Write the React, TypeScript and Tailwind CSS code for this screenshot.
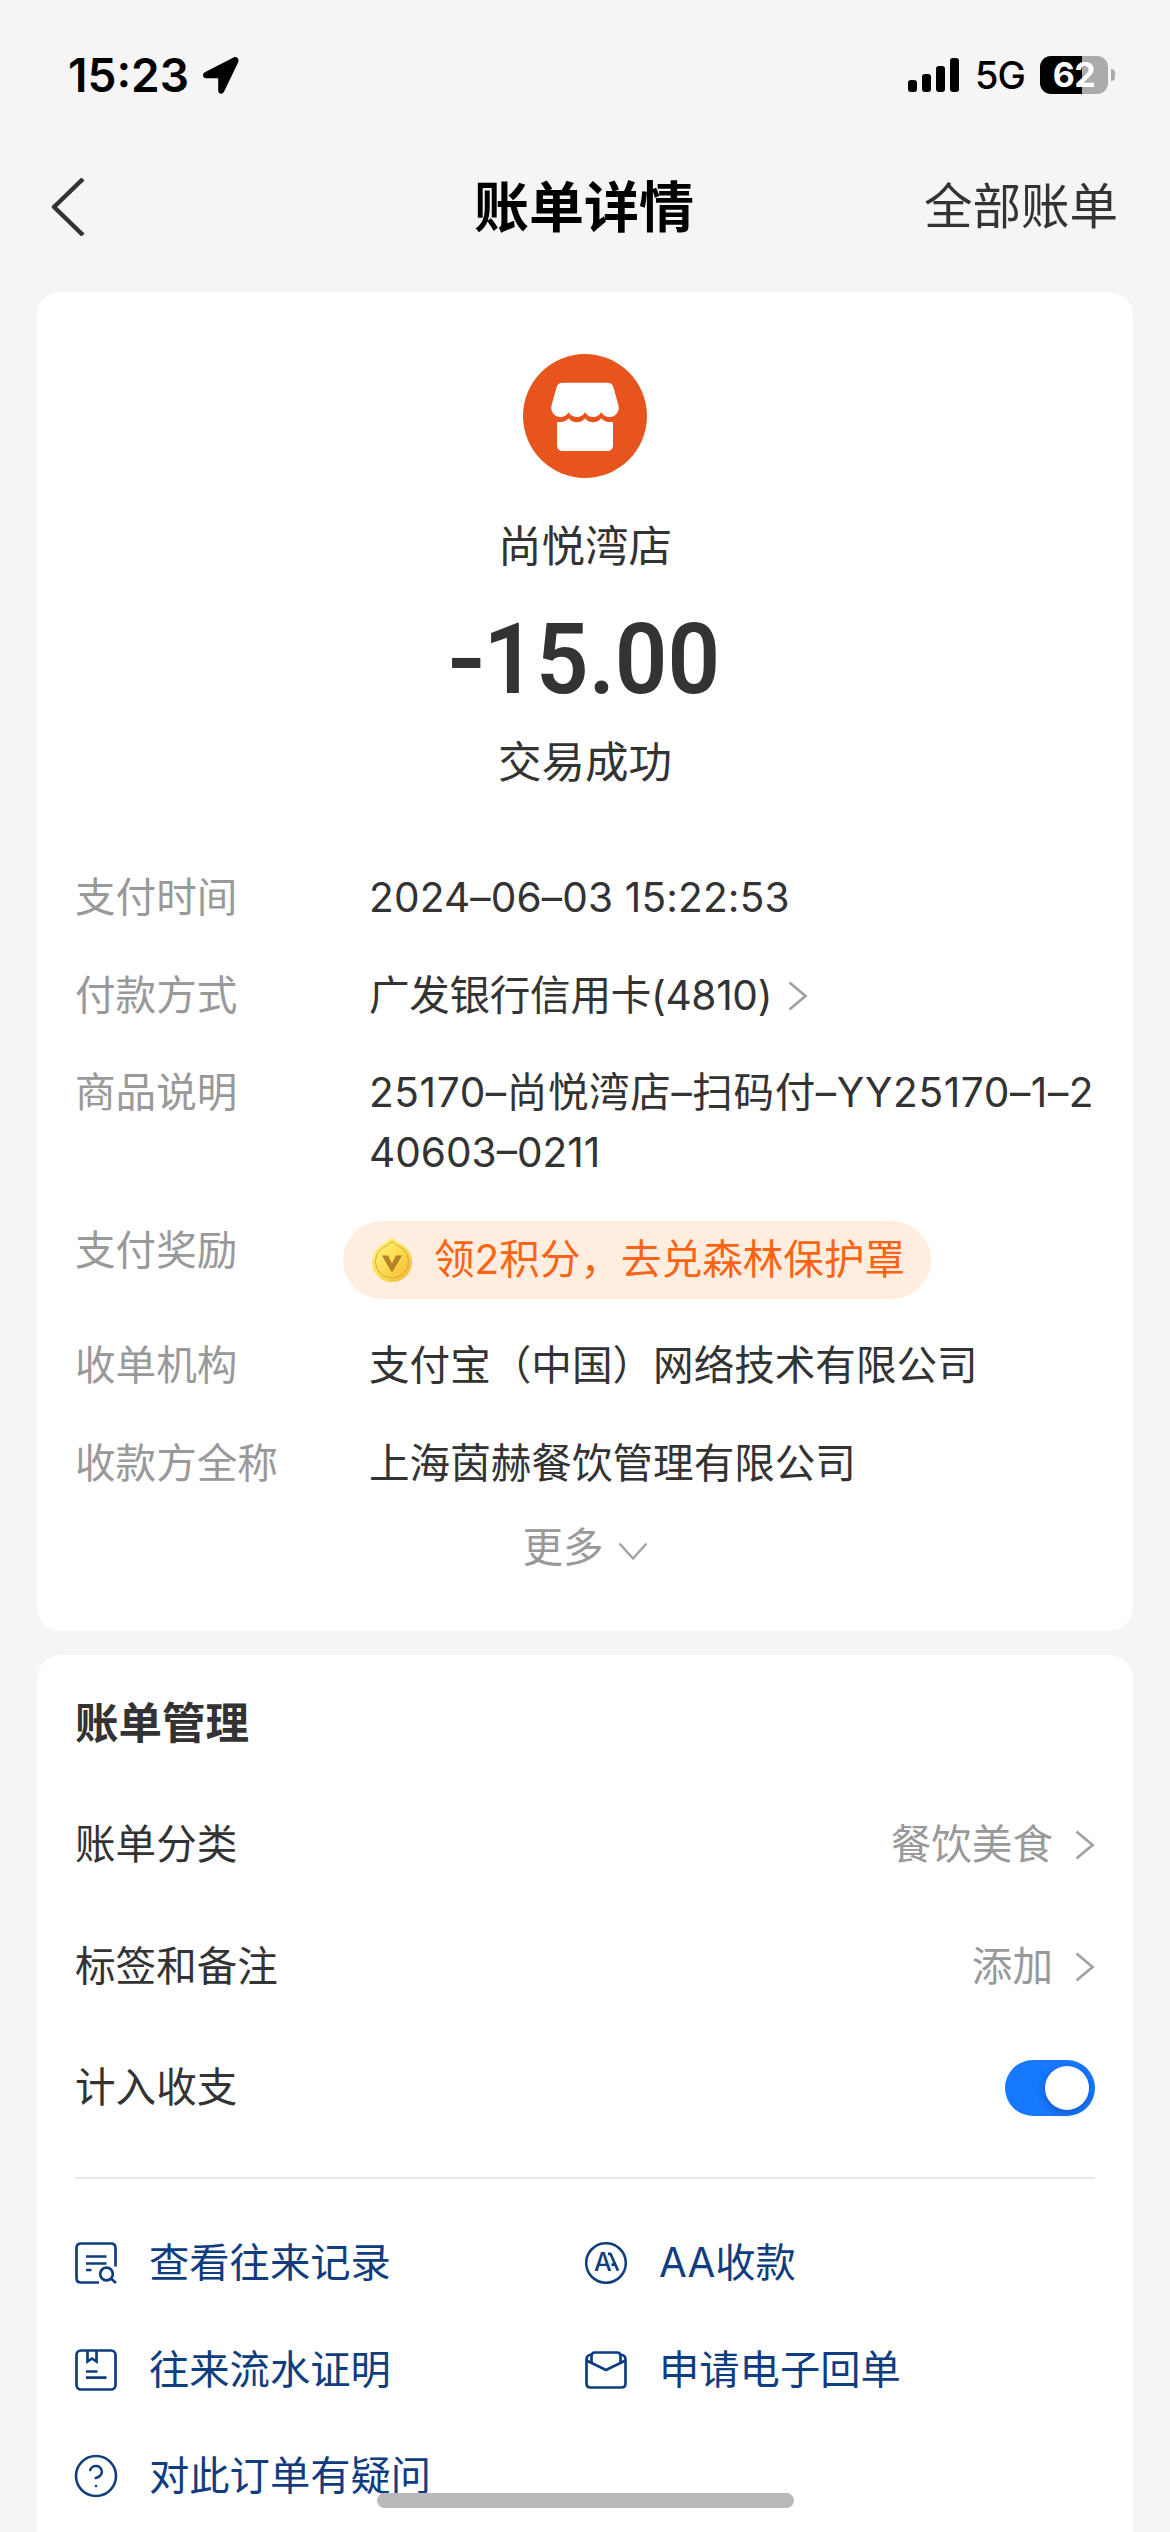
import { ReactNode, useState } from 'react';
import { CircleHelp } from 'lucide-react';

interface RowProps {
  label: string;
  children: ReactNode;
}

const StatusBar = () => (
  <div className="flex h-[150px] items-center justify-between pl-[68px] pr-[55px]">
    <div className="flex items-center gap-[13px]">
      <span className="text-[46px] leading-none font-semibold text-black">15:23</span>
      <svg className="h-[38px] w-[38px]" viewBox="0 0 38 38" fill="#000">
        <path d="M31.5 1.5 2.8 16.2C0 17.8.7 22.2 4 22.3H16.2V34.8C16.3 38 20.6 38.9 22 35.8L36.2 6.2C37.6 2.8 34.6 0 31.5 1.5Z" />
      </svg>
    </div>
    <div className="flex items-center">
      <svg className="h-[36px] w-[52px]" viewBox="0 0 52 36" fill="#000">
        <rect x="0" y="23" width="9" height="12" rx="3" />
        <rect x="14" y="17" width="9" height="18" rx="3" />
        <rect x="28" y="9" width="9" height="26" rx="3" />
        <rect x="42" y="1" width="9" height="34" rx="3" />
      </svg>
      <span className="ml-[15px] w-[51px] text-[38px] leading-none font-[450] tracking-[-1px] text-black">5G</span>
      <div className="ml-[14px] flex h-[38px] w-[68px] items-center justify-center rounded-[11px] bg-linear-to-r from-black from-62% to-[#ababab] to-62%">
        <span className="text-[34px] leading-none font-bold tracking-[-0.5px] text-white">62</span>
      </div>
      <span className="ml-[3px] h-3 w-[4px] rounded-r-full bg-[#ababab]" />
    </div>
  </div>
);

const NavBar = () => (
  <header className="grid h-28 grid-cols-3 items-center pt-0.5 pr-[52px] pl-[50px]">
    <svg className="h-[58px] w-[35px]" viewBox="0 0 35 58" fill="none" stroke="#333" strokeWidth="4.5">
      <path d="M33 1 4 29 33 57" strokeLinejoin="round" />
    </svg>
    <h1 className="text-center text-[55px] leading-none font-bold whitespace-nowrap text-black">账单详情</h1>
    <span className="text-right text-[48.5px] leading-none whitespace-nowrap">全部账单</span>
  </header>
);

const StoreIcon = () => (
  <svg className="h-[124px] w-[124px]" viewBox="0 0 124 124">
    <circle cx="62" cy="62" r="62" fill="#e8541e" />
    <path
      fill="#fff"
      d="M39.5 28.7H84.5Q89.5 28.7 90.5 33.5L95.6 52C96.6 58 92.5 63 86.5 63C83 63 80 61.5 78.3 58.3C76.5 61.5 73.5 63 70 63S63.7 61.5 62 58.3C60.3 61.5 57.5 63 54 63S47 61.5 45.5 58.3C44 61.5 41 63 37.5 63C31.5 63 27.4 58 28.4 52L33.5 33.5Q34.5 28.7 39.5 28.7Z"
    />
    <path
      fill="#fff"
      d="M34 68H38C41 68 43.5 66.8 45.5 64.3C47.5 66.8 50.5 68.3 54 68.3S60 66.8 62 64.3C64 66.8 66.5 68.3 70 68.3S76.3 66.8 78.3 64.3C80.5 66.8 83 68 86 68H90V91Q90 97 84 97H40Q34 97 34 91Z"
    />
  </svg>
);

const CoinIcon = () => (
  <svg className="h-[46px] w-[42px]" viewBox="0 0 42 46">
    <defs>
      <linearGradient id="coin" x1="0" y1="0" x2="1" y2="1">
        <stop offset="0.1" stopColor="#fff27a" />
        <stop offset="0.5" stopColor="#fbdc52" />
        <stop offset="1" stopColor="#f3b62f" />
      </linearGradient>
    </defs>
    <path d="M21 0.5C23 2 26 5 30.5 7.5A20 20 0 1 1 11.5 7.5C16 5 19 2 21 0.5Z" fill="url(#coin)" />
    <path
      d="M21 4.5C23 6.5 26 8.5 29 10A16.5 16.5 0 1 1 13 10C16 8.5 19 6.5 21 4.5Z"
      fill="none"
      stroke="#dfa63a"
      strokeWidth="1"
    />
    <path d="M11 18.5H17L21 26.5 25 18.5H31L21.8 34.5H20.2Z" fill="#b5822a" />
  </svg>
);

const Chevron = () => (
  <svg className="h-[30px] w-[20px] shrink-0" viewBox="0 0 20 30" fill="none" stroke="#a3a3a3" strokeWidth="2.8">
    <path d="M1.5 1.5 17.5 15 1.5 28.5" />
  </svg>
);

const RecordIcon = () => (
  <svg className="h-[42px] w-[42px]" viewBox="0 0 42 42" fill="none" stroke="#0f3d80" strokeWidth="2.7">
    <path d="M40.5 24.5V6Q40.5 1.5 36 1.5H6Q1.5 1.5 1.5 6V36Q1.5 40.5 6 40.5H24" />
    <path d="M11 14.5H31.5M11 21.5H31.5M11 28H16.5" />
    <circle cx="31.5" cy="32" r="6.3" />
    <path d="M36 36.5 41 41" />
  </svg>
);

const StatementIcon = () => (
  <svg className="h-[42px] w-[42px]" viewBox="0 0 42 42" fill="none" stroke="#0f3d80" strokeWidth="2.7">
    <rect x="1.5" y="1.5" width="39" height="39" rx="4.5" />
    <path d="M12.5 2V12.5L17 9.5 21.5 12.5V2M11 22.5H22.5M11 28.7H31.5" />
  </svg>
);

const SplitIcon = () => (
  <svg className="h-[42px] w-[42px]" viewBox="0 0 42 42" fill="#0f3d80">
    <circle cx="21" cy="21" r="19.8" fill="none" stroke="#0f3d80" strokeWidth="2.5" />
    <text x="9" y="28.8" fontSize="25" fontWeight="500">
      A
    </text>
    <path
      d="M23 11.8H25.5L33 28.8M26.5 22.7H30.5"
      fill="none"
      stroke="#0f3d80"
      strokeWidth="2.7"
      strokeLinejoin="round"
    />
  </svg>
);

const MailIcon = () => (
  <svg className="h-[42px] w-[42px]" viewBox="0 0 42 42" fill="none" stroke="#0f3d80" strokeWidth="2.7">
    <path d="M6.5 5.5Q1.5 6 1.5 10.5V34.5Q1.5 38.5 5.5 38.5H36.5Q40.5 38.5 40.5 34.5V10.5Q40.5 6 35.5 5.5" />
    <path d="M6.5 13.5V7Q6.5 3.5 10 3.5H32Q35.5 3.5 35.5 7V13.5" />
    <path d="M1.5 11.5 21 21 40.5 11.5" />
  </svg>
);

const DetailRow: React.FC<RowProps> = ({ label, children }) => (
  <div className="flex items-start">
    <dt className="w-[294px] shrink-0 text-[#999]">{label}</dt>
    <dd className="min-w-0 flex-1">{children}</dd>
  </div>
);

const SettingRow: React.FC<RowProps> = ({ label, children }) => (
  <div className="flex h-[121.5px] items-center justify-between">
    <span>{label}</span>
    {children}
  </div>
);

const LINKS = [
  { label: '查看往来记录', icon: <RecordIcon /> },
  { label: 'AA收款', icon: <SplitIcon /> },
  { label: '往来流水证明', icon: <StatementIcon /> },
  { label: '申请电子回单', icon: <MailIcon /> },
  { label: '对此订单有疑问', icon: <CircleHelp className="-m-[3px]" size={48} strokeWidth={1.3} /> },
];

const App = () => {
  const [included, setIncluded] = useState(true);

  return (
    <div className="relative h-[2532px] w-[1170px] overflow-hidden bg-[#f5f5f5] font-['Inter','Noto_Sans_CJK_SC',sans-serif] font-[370] text-[#333]">
      <StatusBar />
      <NavBar />

      <main className="flex flex-col gap-6 px-[37px] pt-[30px] text-[40.6px] leading-[60px]">
        <section className="rounded-3xl bg-white px-[38px] pt-[62px] pb-[53px]">
          <div className="flex flex-col items-center text-[43.5px]">
            <StoreIcon />
            <p className="mt-[38px]">尚悦湾店</p>
            <p className="mt-[36px] flex scale-x-[0.94] items-center font-['Roboto',sans-serif] text-[98px] leading-[96px] font-[650]">
              <span className="scale-x-[1.15]">-</span>
              <span>15.00</span>
            </p>
            <p className="mt-6">交易成功</p>
          </div>

          <dl className="mt-[76px] flex flex-col gap-[37.5px]">
            <DetailRow label="支付时间">
              <span className="tracking-[0.15px]">2024–06–03 15:22:53</span>
            </DetailRow>
            <DetailRow label="付款方式">
              <span className="flex items-center gap-4">
                <span className="tracking-[-0.3px]">广发银行信用卡(4810)</span>
                <Chevron />
              </span>
            </DetailRow>
            <DetailRow label="商品说明">
              <span className="block break-all">
                <span className="tracking-[0.6px]">25170–尚悦湾店–扫码付–YY25170–1–2</span>
                40603–0211
              </span>
            </DetailRow>
            <DetailRow label="支付奖励">
              <a className="-ml-[26px] flex h-[78px] w-fit items-center gap-[21px] rounded-full bg-[#ffeee0] pr-[26px] pl-7 text-[#fa6414]">
                <CoinIcon />
                领2积分，去兑森林保护罩
              </a>
            </DetailRow>
            <DetailRow label="收单机构">支付宝（中国）网络技术有限公司</DetailRow>
            <DetailRow label="收款方全称">上海茵赫餐饮管理有限公司</DetailRow>
          </dl>

          <button className="mx-auto mt-6 flex items-center gap-[14px] text-[#999]">
            更多
            <svg className="mt-2 h-[19px] w-[30px]" viewBox="0 0 30 19" fill="none" stroke="#a3a3a3" strokeWidth="2.5">
              <path d="M1.5 1.5 15 16.5 28.5 1.5" />
            </svg>
          </button>
        </section>

        <section className="rounded-3xl bg-white px-[38px] pt-[38px] pb-10">
          <h2 className="mb-8 text-[43.5px] font-bold">账单管理</h2>

          <SettingRow label="账单分类">
            <span className="flex items-center gap-[22px] text-[#999]">
              餐饮美食
              <Chevron />
            </span>
          </SettingRow>
          <SettingRow label="标签和备注">
            <span className="flex items-center gap-[22px] text-[#999]">
              添加
              <Chevron />
            </span>
          </SettingRow>
          <SettingRow label="计入收支">
            <button
              role="switch"
              aria-checked={included}
              onClick={() => setIncluded(!included)}
              className={`flex h-14 w-[90px] items-center rounded-full p-1.5 ${included ? 'justify-end bg-[#1677ff]' : 'justify-start bg-[#ccc]'}`}
            >
              <span className="size-11 rounded-full bg-white shadow-[0_3px_8px_rgba(0,0,0,0.25)]" />
            </button>
          </SettingRow>

          <div className="mt-7 h-0.5 bg-[#e8e8e8]" />

          <div className="grid auto-rows-[106.5px] grid-cols-2 pt-[31px] text-[40.3px] text-[#0f3d80]">
            {LINKS.map((link) => (
              <a key={link.label} className="flex items-center gap-8 whitespace-nowrap">
                {link.icon}
                {link.label}
              </a>
            ))}
          </div>
        </section>
      </main>

      {/* Home indicator */}
      <div className="absolute bottom-6 left-[377px] h-[15px] w-[417px] rounded-full bg-[#b9b9b9]" />
    </div>
  );
};

export default App;
